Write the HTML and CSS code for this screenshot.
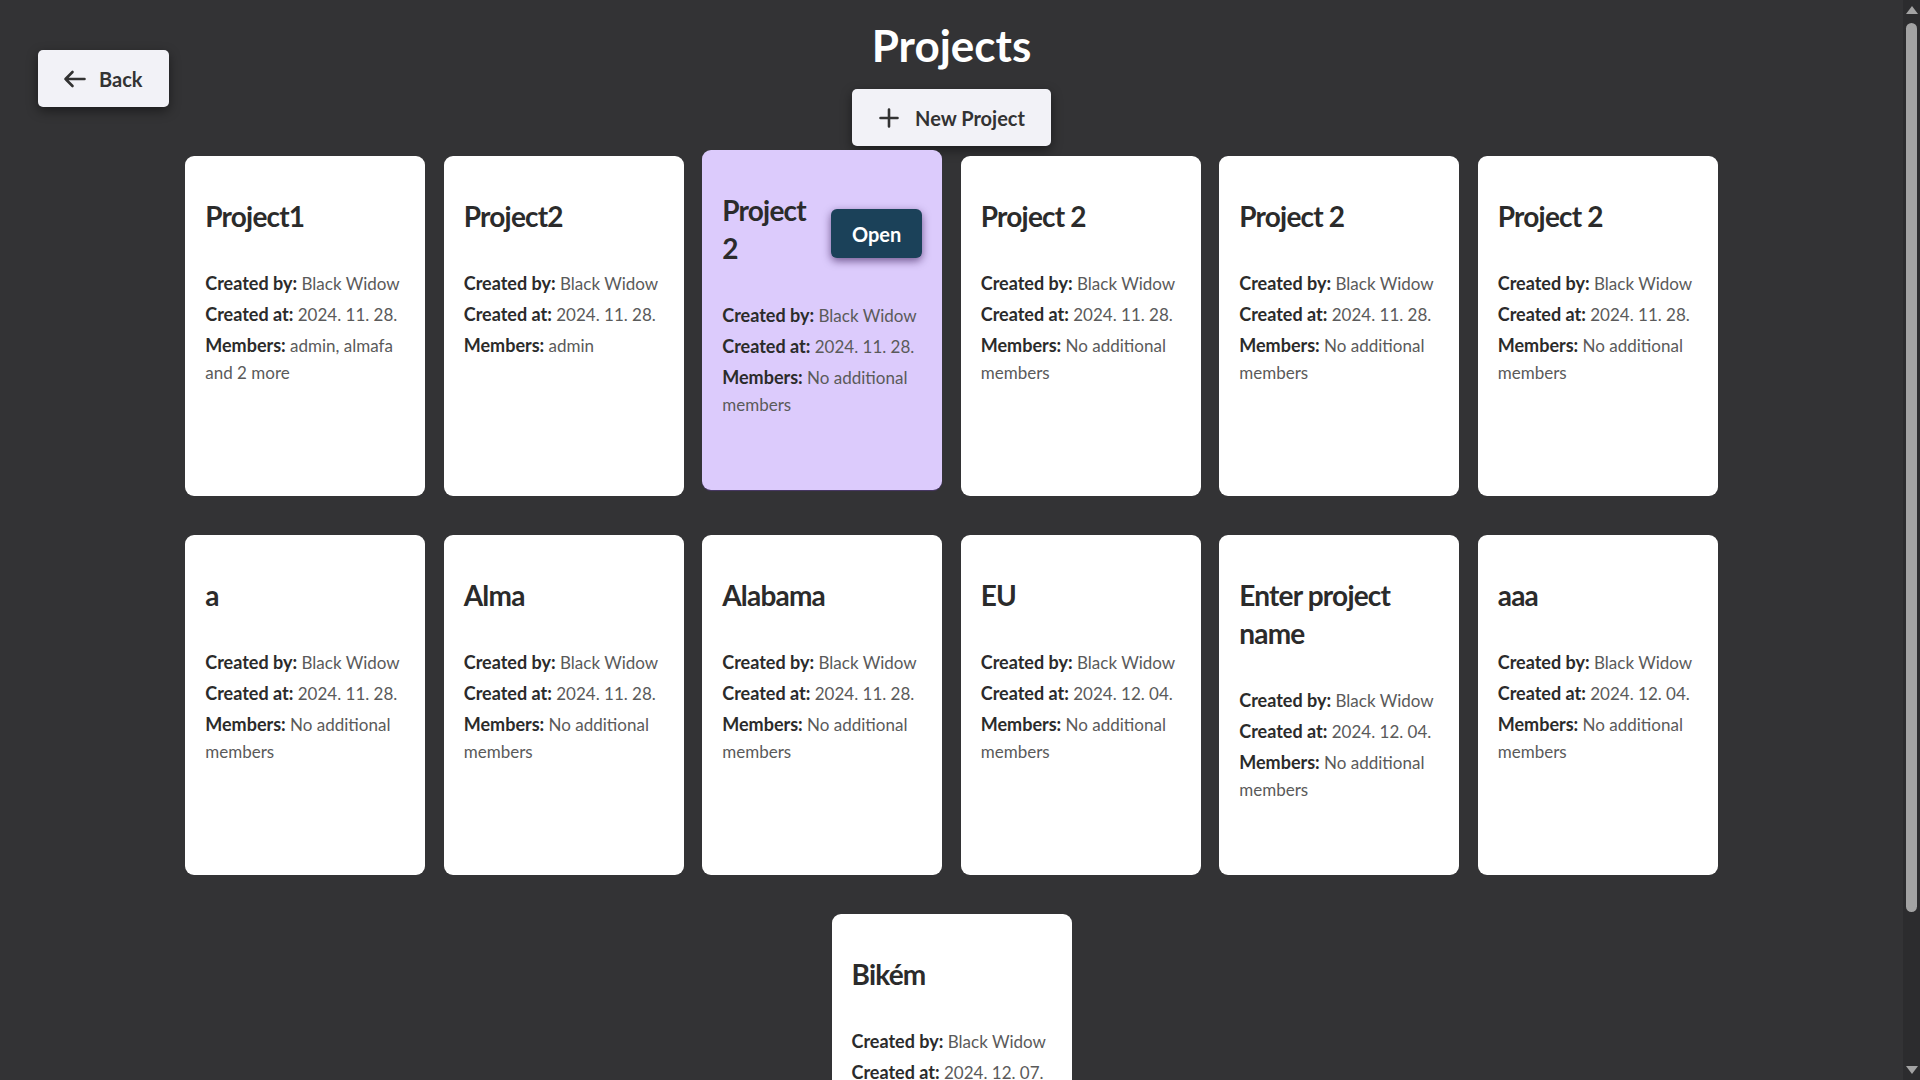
FILE: index.html
```html
<!DOCTYPE html>
<html lang="hu">
<head>
<meta charset="utf-8">
<title>Projects</title>
<link rel="stylesheet" href="styles.css">
</head>
<body>
<div class="page">
  <header class="top">
    <button class="btn back" type="button">
      <svg class="ico" width="23" height="18" viewBox="0 0 23 18" aria-hidden="true"><path d="M21.5 9H2.5M9.5 2L2.5 9l7 7" fill="none" stroke="#333" stroke-width="2.6" stroke-linecap="round" stroke-linejoin="round"/></svg>
      <span>Back</span>
    </button>
    <h1 class="title">Projects</h1>
    <button class="btn new" type="button">
      <svg class="ico" width="20" height="20" viewBox="0 0 20 20" aria-hidden="true"><path d="M10 1.5v17M1.5 10h17" fill="none" stroke="#333" stroke-width="2.6" stroke-linecap="round"/></svg>
      <span>New Project</span>
    </button>
  </header>

  <main class="grid">
    <article class="card">
      <div class="card-head"><h2>Project1</h2></div>
      <div class="info">
        <p><b>Created by:</b> Black Widow</p>
        <p><b>Created at:</b> 2024. 11. 28.</p>
        <p><b>Members:</b> admin, almafa and 2 more</p>
      </div>
    </article>
    <article class="card">
      <div class="card-head"><h2>Project2</h2></div>
      <div class="info">
        <p><b>Created by:</b> Black Widow</p>
        <p><b>Created at:</b> 2024. 11. 28.</p>
        <p><b>Members:</b> admin</p>
      </div>
    </article>
    <article class="card active">
      <div class="card-head"><h2>Project 2</h2><button class="open" type="button">Open</button></div>
      <div class="info">
        <p><b>Created by:</b> Black Widow</p>
        <p><b>Created at:</b> 2024. 11. 28.</p>
        <p><b>Members:</b> No additional members</p>
      </div>
    </article>
    <article class="card">
      <div class="card-head"><h2>Project 2</h2></div>
      <div class="info">
        <p><b>Created by:</b> Black Widow</p>
        <p><b>Created at:</b> 2024. 11. 28.</p>
        <p><b>Members:</b> No additional members</p>
      </div>
    </article>
    <article class="card">
      <div class="card-head"><h2>Project 2</h2></div>
      <div class="info">
        <p><b>Created by:</b> Black Widow</p>
        <p><b>Created at:</b> 2024. 11. 28.</p>
        <p><b>Members:</b> No additional members</p>
      </div>
    </article>
    <article class="card">
      <div class="card-head"><h2>Project 2</h2></div>
      <div class="info">
        <p><b>Created by:</b> Black Widow</p>
        <p><b>Created at:</b> 2024. 11. 28.</p>
        <p><b>Members:</b> No additional members</p>
      </div>
    </article>

    <article class="card">
      <div class="card-head"><h2>a</h2></div>
      <div class="info">
        <p><b>Created by:</b> Black Widow</p>
        <p><b>Created at:</b> 2024. 11. 28.</p>
        <p><b>Members:</b> No additional members</p>
      </div>
    </article>
    <article class="card">
      <div class="card-head"><h2>Alma</h2></div>
      <div class="info">
        <p><b>Created by:</b> Black Widow</p>
        <p><b>Created at:</b> 2024. 11. 28.</p>
        <p><b>Members:</b> No additional members</p>
      </div>
    </article>
    <article class="card">
      <div class="card-head"><h2>Alabama</h2></div>
      <div class="info">
        <p><b>Created by:</b> Black Widow</p>
        <p><b>Created at:</b> 2024. 11. 28.</p>
        <p><b>Members:</b> No additional members</p>
      </div>
    </article>
    <article class="card">
      <div class="card-head"><h2>EU</h2></div>
      <div class="info">
        <p><b>Created by:</b> Black Widow</p>
        <p><b>Created at:</b> 2024. 12. 04.</p>
        <p><b>Members:</b> No additional members</p>
      </div>
    </article>
    <article class="card">
      <div class="card-head"><h2>Enter project name</h2></div>
      <div class="info">
        <p><b>Created by:</b> Black Widow</p>
        <p><b>Created at:</b> 2024. 12. 04.</p>
        <p><b>Members:</b> No additional members</p>
      </div>
    </article>
    <article class="card">
      <div class="card-head"><h2>aaa</h2></div>
      <div class="info">
        <p><b>Created by:</b> Black Widow</p>
        <p><b>Created at:</b> 2024. 12. 04.</p>
        <p><b>Members:</b> No additional members</p>
      </div>
    </article>

    <article class="card">
      <div class="card-head"><h2>Bikém</h2></div>
      <div class="info">
        <p><b>Created by:</b> Black Widow</p>
        <p><b>Created at:</b> 2024. 12. 07.</p>
        <p><b>Members:</b> No additional members</p>
      </div>
    </article>
  </main>
</div>

<div class="scrollbar" aria-hidden="true">
  <span class="sb-up"></span>
  <span class="sb-thumb"></span>
  <span class="sb-down"></span>
</div>
</body>
</html>
```
FILE: styles.css
```css
html {
  background: #333335;
}
body {
  margin: 0 17px 0 0;
  font-family: Lato, "Open Sans", "Noto Sans", sans-serif;
  color: #2b2b2b;
}

/* window scrollbar (overlay at right edge) */
.scrollbar {
  position: fixed;
  top: 0;
  right: 0;
  bottom: 0;
  width: 17px;
  background: #2c2c2e;
  display: flex;
  flex-direction: column;
  align-items: center;
}
.sb-up,
.sb-down {
  width: 0;
  height: 0;
  border-left: 6.5px solid transparent;
  border-right: 6.5px solid transparent;
}
.sb-up {
  margin-top: 6px;
  border-bottom: 8px solid #a3a3a3;
}
.sb-thumb {
  width: 11px;
  height: 889px;
  margin-top: 9px;
  border-radius: 6px;
  background: #a3a3a3;
}
.sb-down {
  margin-top: auto;
  margin-bottom: 6px;
  border-top: 8px solid #a3a3a3;
}

/* header */
.top {
  display: grid;
  grid-template-columns: 1fr auto 1fr;
  grid-template-rows: auto auto;
}
.btn {
  display: inline-flex;
  align-items: center;
  height: 57px;
  border: 0;
  border-radius: 5px;
  background: #f2f2f7;
  color: #333;
  font-family: Lato, "Open Sans", sans-serif;
  font-size: 20px;
  font-weight: 700;
  box-shadow: 0 4px 12px rgba(0, 0, 0, 0.45);
  cursor: pointer;
}
.ico {
  display: block;
  flex-shrink: 0;
}
.back {
  grid-column: 1;
  grid-row: 1 / span 2;
  justify-self: start;
  align-self: start;
  margin: 50px 0 0 38px;
  padding: 0 26px 0 25px;
  gap: 13px;
}
.title {
  grid-column: 2;
  grid-row: 1;
  margin: 19px 0 0;
  font-size: 44px;
  line-height: 53px;
  font-weight: 700;
  color: #ffffff;
  text-align: center;
}
.new {
  grid-column: 2;
  grid-row: 2;
  justify-self: center;
  margin-top: 17px;
  padding: 0 26px 0 27px;
  gap: 16px;
}

/* cards */
.grid {
  display: flex;
  flex-wrap: wrap;
  justify-content: center;
  gap: 39px 18.5px;
  width: 1533px;
  margin: 10px auto 17px;
}
.card {
  width: 240px;
  height: 340px;
  box-sizing: border-box;
  padding: 20px;
  background: #ffffff;
  border-radius: 9px;
}
.card.active {
  background: #dccbfc;
  transform: translateY(-6px);
  box-shadow: 0 1px 1px rgba(90, 60, 140, 0.6);
}
.card-head {
  display: flex;
  align-items: flex-start;
  gap: 10px;
  margin-top: 21px;
}
.card-head h2 {
  margin: 0;
  font-size: 28px;
  line-height: 38px;
  font-weight: 700;
  letter-spacing: -0.8px;
  color: #2b2b2b;
}
.open {
  flex-shrink: 0;
  margin-left: auto;
  margin-top: 18px;
  height: 49px;
  padding: 0 21px;
  border: 0;
  border-radius: 6px;
  background: #1b4159;
  color: #ffffff;
  font-family: Lato, "Open Sans", sans-serif;
  font-size: 20px;
  font-weight: 700;
  box-shadow: 0 3px 9px rgba(40, 10, 70, 0.6);
  cursor: pointer;
}
.info {
  margin-top: 35px;
}
.info p {
  margin: 0 0 4px;
  font-size: 17px;
  line-height: 27px;
  color: #5a5a5a;
}
.info b {
  font-size: 18px;
  font-weight: 700;
  color: #2b2b2b;
}
```
